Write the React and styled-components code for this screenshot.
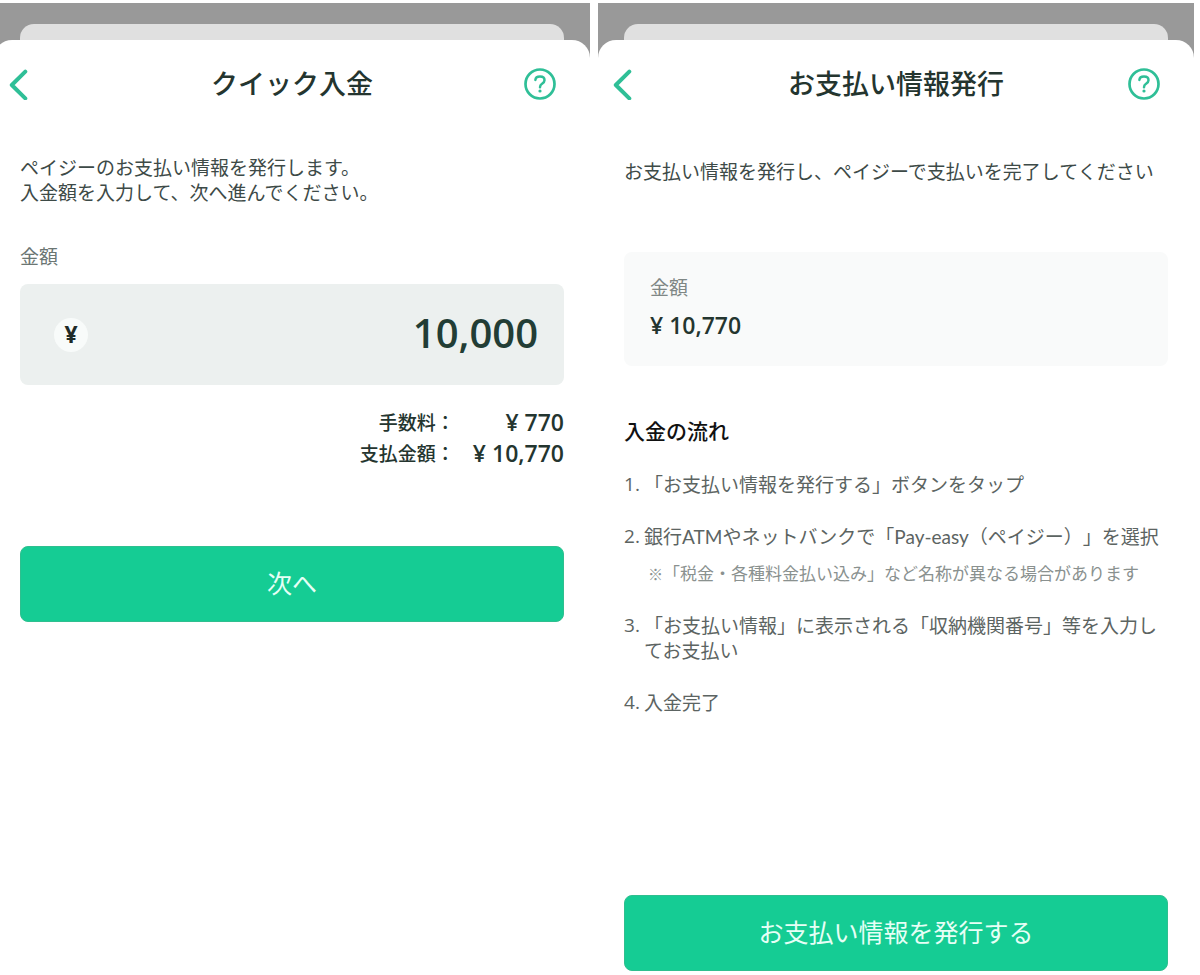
import React, { useState } from 'react';
import styled, { createGlobalStyle } from 'styled-components';

const GlobalStyle = createGlobalStyle`
  * {
    box-sizing: border-box;
  }
  body {
    margin: 0;
    background-color: #fff;
    color: #3d4a47;
    font-family: 'Lato', 'Noto Sans CJK JP', sans-serif;
    font-size: 19px;
    line-height: 25px;
    text-spacing-trim: space-all;
  }
`;

const steps = [
  { text: '「お支払い情報を発行する」ボタンをタップ' },
  {
    text: '銀行ATMやネットバンクで「Pay-easy（ペイジー）」を選択',
    note: '「税金・各種料金払い込み」など名称が異なる場合があります',
  },
  { text: '「お支払い情報」に表示される「収納機関番号」等を入力してお支払い' },
  { text: '入金完了' },
];

const Screen = ({ title, children }) => (
  <Phone>
    <BackSheet />
    <Sheet>
      <Header>
        <IconButton type="button" aria-label="戻る">
          <svg width="20" height="32" viewBox="0 0 20 32" fill="none">
            <path
              d="M17.3 3.6L3.8 17L17.3 30.4"
              stroke="#2fbf97"
              strokeWidth="4"
              strokeLinecap="round"
              strokeLinejoin="round"
            />
          </svg>
        </IconButton>
        <Title>{title}</Title>
        <IconButton type="button" aria-label="ヘルプ" $end>
          <svg width="32" height="32" viewBox="0 0 32 32" fill="none">
            <circle cx="16" cy="16" r="14.5" stroke="#2fbf97" strokeWidth="2.7" />
            <path
              d="M11.4 11.9C11.6 9.7 13.4 8.6 16 8.6C18.7 8.6 20.5 10 20.5 12.2C20.5 14.1 19.3 14.9 18 15.8C16.6 16.7 16 17.5 16 19.3"
              stroke="#2fbf97"
              strokeWidth="2.5"
              strokeLinecap="round"
            />
            <circle cx="16" cy="23" r="1.6" fill="#2fbf97" />
          </svg>
        </IconButton>
      </Header>
      {children}
    </Sheet>
  </Phone>
);

const QuickDeposit = () => {
  const [amount, setAmount] = useState('10,000');

  return (
    <Screen title="クイック入金">
      <Body>
        <Lead>
          ペイジーのお支払い情報を発行します。
          <br />
          入金額を入力して、次へ進んでください。
        </Lead>
        <AmountLabel htmlFor="amount">金額</AmountLabel>
        <AmountField>
          <YenBadge>¥</YenBadge>
          <AmountInput
            id="amount"
            type="text"
            inputMode="numeric"
            value={amount}
            onChange={event => setAmount(event.target.value)}
          />
        </AmountField>
        <Totals>
          <dt>手数料：</dt>
          <Price as="dd">¥ 770</Price>
          <dt>支払金額：</dt>
          <Price as="dd">¥ 10,770</Price>
        </Totals>
        <NextButton type="button">次へ</NextButton>
      </Body>
    </Screen>
  );
};

const PaymentIssue = () => (
  <Screen title="お支払い情報発行">
    <Body $top={31}>
      <Lead>お支払い情報を発行し、ペイジーで支払いを完了してください</Lead>
      <SummaryCard>
        <SummaryLabel>金額</SummaryLabel>
        <Price>¥ 10,770</Price>
      </SummaryCard>
      <FlowTitle>入金の流れ</FlowTitle>
      <StepList>
        {steps.map(({ text, note }, index) => (
          <Step key={text}>
            <StepNumber>{index + 1}.</StepNumber>
            <div>
              {text}
              {note && (
                <Note>
                  <NoteMark>※</NoteMark>
                  {note}
                </Note>
              )}
            </div>
          </Step>
        ))}
      </StepList>
      <IssueButton type="button">お支払い情報を発行する</IssueButton>
    </Body>
  </Screen>
);

const App = () => (
  <Page>
    <GlobalStyle />
    <Phones>
      <QuickDeposit />
      <PaymentIssue />
    </Phones>
  </Page>
);

export default App;

const Page = styled.main`
  overflow: hidden;
`;

const Phones = styled.div`
  display: grid;
  grid-template-columns: 1fr 1fr;
  gap: 8px;
  min-height: 100vh;
  margin-left: -6px;
  padding: 3px 6px 0 0;
`;

const Phone = styled.section`
  display: flex;
  flex-direction: column;
  min-width: 0;
  background-color: #999;
`;

const BackSheet = styled.div`
  height: 16px;
  margin: 21px 26px 0;
  border-radius: 14px 14px 0 0;
  background-color: #e0e0e0;
`;

const Sheet = styled.div`
  flex: 1;
  display: flex;
  flex-direction: column;
  border-radius: 18px 18px 0 0;
  background-color: #fff;
`;

const Header = styled.header`
  display: grid;
  grid-template-columns: 1fr auto 1fr;
  align-items: center;
  height: 88px;
`;

const IconButton = styled.button`
  display: flex;
  justify-self: ${({ $end }) => ($end ? 'end' : 'start')};
  margin: ${({ $end }) => ($end ? '0 34px 0 0' : '0 0 0 14px')};
  padding: 0;
  border: none;
  background-color: transparent;
  cursor: pointer;
`;

const Title = styled.h1`
  margin: 0;
  color: #24352f;
  font-size: 27px;
  font-weight: 500;
  line-height: 40px;
`;

const Body = styled.div`
  flex: 1;
  display: flex;
  flex-direction: column;
  padding: ${({ $top = 27 }) => $top}px 26px 4px;
`;

const Lead = styled.p`
  margin: 0;
`;

const AmountLabel = styled.label`
  margin: 39px 0 15px;
  color: #6b7673;
`;

const AmountField = styled.div`
  display: flex;
  align-items: center;
  height: 101px;
  padding: 0 26px 0 34px;
  border-radius: 8px;
  background-color: #ecf0ef;
`;

const YenBadge = styled.span`
  flex: none;
  width: 34px;
  height: 34px;
  border-radius: 50%;
  background-color: #f8fbfa;
  color: #1f2b28;
  font-family: 'Open Sans', sans-serif;
  font-size: 23px;
  font-weight: 700;
  line-height: 32px;
  text-align: center;
`;

const AmountInput = styled.input`
  flex: 1;
  min-width: 0;
  padding: 0 0 4px;
  border: none;
  outline: none;
  background-color: transparent;
  color: #223d35;
  font-family: 'Open Sans', sans-serif;
  font-size: 40px;
  font-weight: 600;
  text-align: right;
`;

const Totals = styled.dl`
  display: grid;
  grid-template-columns: auto auto;
  justify-content: end;
  column-gap: 18px;
  margin: 22px 0 0;
  color: #24352f;
  font-weight: 500;
  line-height: 31px;
  text-align: right;

  dd {
    margin: 0;
  }
`;

const Price = styled.div`
  color: #24352f;
  font-family: 'Open Sans', sans-serif;
  font-size: 23px;
  font-weight: 600;
`;

const Button = styled.button`
  height: 76px;
  padding: 0 0 4px;
  border: 1px solid #2fbf8f;
  border-radius: 8px;
  background-color: #15cc94;
  color: #e6fff6;
  font-family: inherit;
  font-size: 25px;
  cursor: pointer;
`;

const NextButton = styled(Button)`
  margin-top: 77px;
`;

const IssueButton = styled(Button)`
  margin-top: auto;
`;

const SummaryCard = styled.div`
  display: flex;
  flex-direction: column;
  gap: 13px;
  margin-top: 68px;
  padding: 23px 26px 28px;
  border-radius: 8px;
  background-color: #f9fafa;
`;

const SummaryLabel = styled.div`
  color: #7f8785;
`;

const FlowTitle = styled.h2`
  margin: 52px 0 28px;
  color: #111;
  font-size: 21px;
  font-weight: 500;
  line-height: 26px;
`;

const StepList = styled.ol`
  display: flex;
  flex-direction: column;
  gap: 27px;
  margin: 0 0 27px;
  padding: 0;
  list-style: none;
  color: #5c6462;
`;

const Step = styled.li`
  display: grid;
  grid-template-columns: 20px 1fr;
`;

const StepNumber = styled.span`
  font-family: 'Open Sans', sans-serif;
`;

const Note = styled.p`
  margin: 12px 0 0 4px;
  color: #8a918f;
  font-size: 17px;
`;

const NoteMark = styled.span`
  font-size: 15px;
  line-height: 1;
`;
